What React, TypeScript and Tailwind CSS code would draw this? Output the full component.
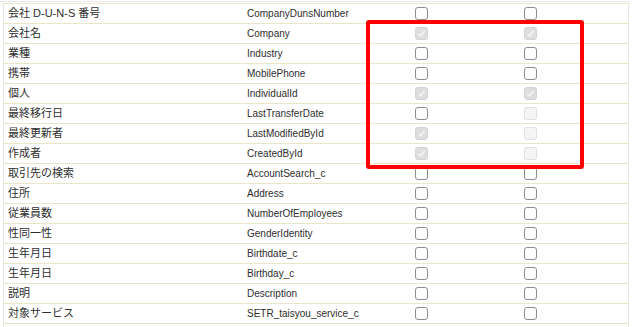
import React from 'react';

type Box = 'on' | 'offDisabled' | 'onDisabled';

const rows: [string, string, Box, Box][] = [
  ['会社 D-U-N-S 番号', 'CompanyDunsNumber', 'on', 'on'],
  ['会社名', 'Company', 'onDisabled', 'onDisabled'],
  ['業種', 'Industry', 'on', 'on'],
  ['携帯', 'MobilePhone', 'on', 'on'],
  ['個人', 'IndividualId', 'onDisabled', 'onDisabled'],
  ['最終移行日', 'LastTransferDate', 'on', 'offDisabled'],
  ['最終更新者', 'LastModifiedById', 'onDisabled', 'offDisabled'],
  ['作成者', 'CreatedById', 'onDisabled', 'offDisabled'],
  ['取引先の検索', 'AccountSearch_c', 'on', 'on'],
  ['住所', 'Address', 'on', 'on'],
  ['従業員数', 'NumberOfEmployees', 'on', 'on'],
  ['性同一性', 'GenderIdentity', 'on', 'on'],
  ['生年月日', 'Birthdate_c', 'on', 'on'],
  ['生年月日', 'Birthday_c', 'on', 'on'],
  ['説明', 'Description', 'on', 'on'],
  ['対象サービス', 'SETR_taisyou_service_c', 'on', 'on'],
  ['様な顧客', 'Customer_c', 'on', 'on'],
];

function CheckBox({ state }: { state: Box }) {
  if (state === 'onDisabled') {
    return (
      <span className="flex h-[13px] w-[13px] items-center justify-center rounded-[3px] border border-[#d4d4d4] bg-[#dedede]">
        <svg width="9" height="9" viewBox="0 0 9 9">
          <path d="M1.5 4.8 L3.6 6.8 L7.6 1.8" fill="none" stroke="#f4f4f4" strokeWidth="1.6" />
        </svg>
      </span>
    );
  }
  if (state === 'offDisabled') {
    return <span className="block h-[13px] w-[13px] rounded-[3px] border border-[#e0e0e0] bg-[#f5f5f5]" />;
  }
  return <span className="block h-[13px] w-[13px] rounded-[3px] border border-[#8c8c8c] bg-white" />;
}

export default function App() {
  return (
    <div
      className="relative h-[327px] w-[638px] overflow-hidden bg-white text-[11px] text-[#2e2e2e]"
      style={{ fontFamily: '"Liberation Sans", "Noto Sans CJK JP", sans-serif' }}
    >
      <div className="mt-[1px] h-[2px] w-[629px] border-t border-[#e8e8e8]" />
      <div className="ml-[3px] w-[626px] border-l border-r border-[#e4e4e4]">
        {rows.map(([label, api, a, b], i) => (
          <div key={i} className="flex h-[20px] items-center border-t border-[#ece6c8]">
            <div className="w-[243px] pl-[4px] leading-none whitespace-nowrap">{label}</div>
            <div className="w-[115px] text-[10px] leading-none whitespace-nowrap">{api}</div>
            <div className="flex w-[119px] justify-center">
              <CheckBox state={a} />
            </div>
            <div className="flex w-[98px] justify-center">
              <CheckBox state={b} />
            </div>
          </div>
        ))}
      </div>

      {/* highlight */}
      <div className="absolute left-[366px] top-[20px] h-[149px] w-[218px] rounded-[3px] border-4 border-[#ff0000]" />
    </div>
  );
}
